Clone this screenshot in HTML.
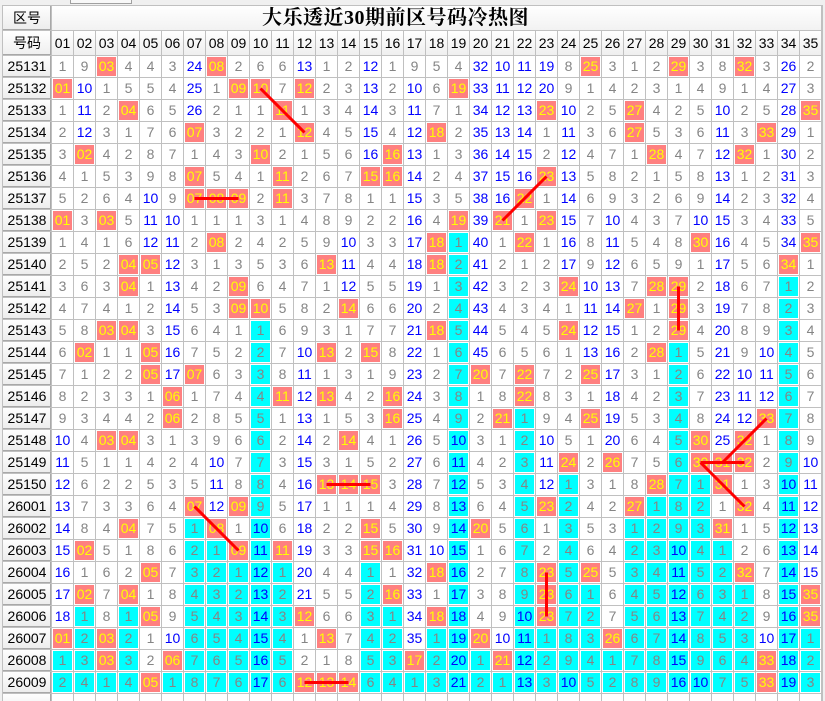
<!DOCTYPE html>
<html><head><meta charset="utf-8">
<style>
html,body{margin:0;padding:0;background:#f0f0f0;width:825px;height:701px;overflow:hidden;position:relative}
.tab{position:absolute;left:70px;top:-1px;width:60px;height:3px;border:1px solid #a0a0a0;background:#f8f8f8}
table{position:absolute;left:2px;top:5px;width:820px;border-collapse:separate;border-spacing:1px;background:#c0c0c0;table-layout:fixed;font-family:"Liberation Sans","Noto Sans CJK SC",sans-serif;font-size:14px}
col{width:21px}
col.h{width:48px}
td{height:21px;padding:0;background:#fff;color:#858585;text-align:center;vertical-align:middle;line-height:21px;overflow:hidden;white-space:nowrap}
td.h{color:#000;background:linear-gradient(#fefefe,#ececec);box-shadow:inset -1px -1px 0 #a8a8a8}
tr.t td{height:24px}
tr.t td.title{font-family:"Liberation Serif","Noto Serif CJK SC",serif;font-weight:bold;font-size:20px;color:#000;text-align:left;padding-left:210px;background:linear-gradient(#fff,#f2f2f2);letter-spacing:0.5px}
tr.n td{height:24px;color:#000;background:linear-gradient(#fff,#efefef)}
.b{color:#0000ff}
.r{background:#ff8080;color:#ffff00;box-shadow:inset 0 0 0 1px #fff}
.c{background:#00ffff;box-shadow:inset 0 0 0 1px #fff}
.cb{background:#00ffff;color:#0000ff;box-shadow:inset 0 0 0 1px #fff}
svg{position:absolute;left:0;top:0}
</style></head><body>
<div class="tab"></div>
<table>
<colgroup><col class="h"><col><col><col><col><col><col><col><col><col><col><col><col><col><col><col><col><col><col><col><col><col><col><col><col><col><col><col><col><col><col><col><col><col><col><col></colgroup>
<tr class="t"><td class="h">区号</td><td class="title" colspan="35">大乐透近30期前区号码冷热图</td></tr>
<tr class="n"><td class="h">号码</td><td>01<td>02<td>03<td>04<td>05<td>06<td>07<td>08<td>09<td>10<td>11<td>12<td>13<td>14<td>15<td>16<td>17<td>18<td>19<td>20<td>21<td>22<td>23<td>24<td>25<td>26<td>27<td>28<td>29<td>30<td>31<td>32<td>33<td>34<td>35</tr>
<tr><td class="h">25131<td>1<td>9<td class=r>03<td>4<td>4<td>3<td class=b>24<td class=r>08<td>2<td>6<td>6<td class=b>13<td>1<td>2<td class=b>12<td>1<td>9<td>5<td>4<td class=b>32<td class=b>10<td class=b>11<td class=b>19<td>8<td class=r>25<td>3<td>1<td>2<td class=r>29<td>3<td>8<td class=r>32<td>3<td class=b>26<td>2</tr>
<tr><td class="h">25132<td class=r>01<td class=b>10<td>1<td>5<td>5<td>4<td class=b>25<td>1<td class=r>09<td class=r>10<td>7<td class=r>12<td>2<td>3<td class=b>13<td>2<td class=b>10<td>6<td class=r>19<td class=b>33<td class=b>11<td class=b>12<td class=b>20<td>9<td>1<td>4<td>2<td>3<td>1<td>4<td>9<td>1<td>4<td class=b>27<td>3</tr>
<tr><td class="h">25133<td>1<td class=b>11<td>2<td class=r>04<td>6<td>5<td class=b>26<td>2<td>1<td>1<td class=r>11<td>1<td>3<td>4<td class=b>14<td>3<td class=b>11<td>7<td>1<td class=b>34<td class=b>12<td class=b>13<td class=r>23<td class=b>10<td>2<td>5<td class=r>27<td>4<td>2<td>5<td class=b>10<td>2<td>5<td class=b>28<td class=r>35</tr>
<tr><td class="h">25134<td>2<td class=b>12<td>3<td>1<td>7<td>6<td class=r>07<td>3<td>2<td>2<td>1<td class=r>12<td>4<td>5<td class=b>15<td>4<td class=b>12<td class=r>18<td>2<td class=b>35<td class=b>13<td class=b>14<td>1<td class=b>11<td>3<td>6<td class=r>27<td>5<td>3<td>6<td class=b>11<td>3<td class=r>33<td class=b>29<td>1</tr>
<tr><td class="h">25135<td>3<td class=r>02<td>4<td>2<td>8<td>7<td>1<td>4<td>3<td class=r>10<td>2<td>1<td>5<td>6<td class=b>16<td class=r>16<td class=b>13<td>1<td>3<td class=b>36<td class=b>14<td class=b>15<td>2<td class=b>12<td>4<td>7<td>1<td class=r>28<td>4<td>7<td class=b>12<td class=r>32<td>1<td class=b>30<td>2</tr>
<tr><td class="h">25136<td>4<td>1<td>5<td>3<td>9<td>8<td class=r>07<td>5<td>4<td>1<td class=r>11<td>2<td>6<td>7<td class=r>15<td class=r>16<td class=b>14<td>2<td>4<td class=b>37<td class=b>15<td class=b>16<td class=r>23<td class=b>13<td>5<td>8<td>2<td>1<td>5<td>8<td class=b>13<td>1<td>2<td class=b>31<td>3</tr>
<tr><td class="h">25137<td>5<td>2<td>6<td>4<td class=b>10<td>9<td class=r>07<td class=r>08<td class=r>09<td>2<td class=r>11<td>3<td>7<td>8<td>1<td>1<td class=b>15<td>3<td>5<td class=b>38<td class=b>16<td class=r>22<td>1<td class=b>14<td>6<td>9<td>3<td>2<td>6<td>9<td class=b>14<td>2<td>3<td class=b>32<td>4</tr>
<tr><td class="h">25138<td class=r>01<td>3<td class=r>03<td>5<td class=b>11<td class=b>10<td>1<td>1<td>1<td>3<td>1<td>4<td>8<td>9<td>2<td>2<td class=b>16<td>4<td class=r>19<td class=b>39<td class=r>21<td>1<td class=r>23<td class=b>15<td>7<td class=b>10<td>4<td>3<td>7<td class=b>10<td class=b>15<td>3<td>4<td class=b>33<td>5</tr>
<tr><td class="h">25139<td>1<td>4<td>1<td>6<td class=b>12<td class=b>11<td>2<td class=r>08<td>2<td>4<td>2<td>5<td>9<td class=b>10<td>3<td>3<td class=b>17<td class=r>18<td class=c>1<td class=b>40<td>1<td class=r>22<td>1<td class=b>16<td>8<td class=b>11<td>5<td>4<td>8<td class=r>30<td class=b>16<td>4<td>5<td class=b>34<td class=r>35</tr>
<tr><td class="h">25140<td>2<td>5<td>2<td class=r>04<td class=r>05<td class=b>12<td>3<td>1<td>3<td>5<td>3<td>6<td class=r>13<td class=b>11<td>4<td>4<td class=b>18<td class=r>18<td class=c>2<td class=b>41<td>2<td>1<td>2<td class=b>17<td>9<td class=b>12<td>6<td>5<td>9<td>1<td class=b>17<td>5<td>6<td class=r>34<td>1</tr>
<tr><td class="h">25141<td>3<td>6<td>3<td class=r>04<td>1<td class=b>13<td>4<td>2<td class=r>09<td>6<td>4<td>7<td>1<td class=b>12<td>5<td>5<td class=b>19<td>1<td class=c>3<td class=b>42<td>3<td>2<td>3<td class=r>24<td class=b>10<td class=b>13<td>7<td class=r>28<td class=r>29<td>2<td class=b>18<td>6<td>7<td class=c>1<td>2</tr>
<tr><td class="h">25142<td>4<td>7<td>4<td>1<td>2<td class=b>14<td>5<td>3<td class=r>09<td class=r>10<td>5<td>8<td>2<td class=r>14<td>6<td>6<td class=b>20<td>2<td class=c>4<td class=b>43<td>4<td>3<td>4<td>1<td class=b>11<td class=b>14<td class=r>27<td>1<td class=r>29<td>3<td class=b>19<td>7<td>8<td class=c>2<td>3</tr>
<tr><td class="h">25143<td>5<td>8<td class=r>03<td class=r>04<td>3<td class=b>15<td>6<td>4<td>1<td class=c>1<td>6<td>9<td>3<td>1<td>7<td>7<td class=b>21<td class=r>18<td class=c>5<td class=b>44<td>5<td>4<td>5<td class=r>24<td class=b>12<td class=b>15<td>1<td>2<td class=r>29<td>4<td class=b>20<td>8<td>9<td class=c>3<td>4</tr>
<tr><td class="h">25144<td>6<td class=r>02<td>1<td>1<td class=r>05<td class=b>16<td>7<td>5<td>2<td class=c>2<td>7<td class=b>10<td class=r>13<td>2<td class=r>15<td>8<td class=b>22<td>1<td class=c>6<td class=b>45<td>6<td>5<td>6<td>1<td class=b>13<td class=b>16<td>2<td class=r>28<td class=c>1<td>5<td class=b>21<td>9<td class=b>10<td class=c>4<td>5</tr>
<tr><td class="h">25145<td>7<td>1<td>2<td>2<td class=r>05<td class=b>17<td class=r>07<td>6<td>3<td class=c>3<td>8<td class=b>11<td>1<td>3<td>1<td>9<td class=b>23<td>2<td class=c>7<td class=r>20<td>7<td class=r>22<td>7<td>2<td class=r>25<td class=b>17<td>3<td>1<td class=c>2<td>6<td class=b>22<td class=b>10<td class=b>11<td class=c>5<td>6</tr>
<tr><td class="h">25146<td>8<td>2<td>3<td>3<td>1<td class=r>06<td>1<td>7<td>4<td class=c>4<td class=r>11<td class=b>12<td class=r>13<td>4<td>2<td class=r>16<td class=b>24<td>3<td class=c>8<td>1<td>8<td class=r>22<td>8<td>3<td>1<td class=b>18<td>4<td>2<td class=c>3<td>7<td class=b>23<td class=b>11<td class=b>12<td class=c>6<td>7</tr>
<tr><td class="h">25147<td>9<td>3<td>4<td>4<td>2<td class=r>06<td>2<td>8<td>5<td class=c>5<td>1<td class=b>13<td>1<td>5<td>3<td class=r>16<td class=b>25<td>4<td class=c>9<td>2<td class=r>21<td class=c>1<td>9<td>4<td class=r>25<td class=b>19<td>5<td>3<td class=c>4<td>8<td class=b>24<td class=b>12<td class=r>33<td class=c>7<td>8</tr>
<tr><td class="h">25148<td class=b>10<td>4<td class=r>03<td class=r>04<td>3<td>1<td>3<td>9<td>6<td class=c>6<td>2<td class=b>14<td>2<td class=r>14<td>4<td>1<td class=b>26<td>5<td class=cb>10<td>3<td>1<td class=c>2<td class=b>10<td>5<td>1<td class=b>20<td>6<td>4<td class=c>5<td class=r>30<td class=b>25<td class=r>32<td>1<td class=c>8<td>9</tr>
<tr><td class="h">25149<td class=b>11<td>5<td>1<td>1<td>4<td>2<td>4<td class=b>10<td>7<td class=c>7<td>3<td class=b>15<td>3<td>1<td>5<td>2<td class=b>27<td>6<td class=cb>11<td>4<td>2<td class=c>3<td class=b>11<td class=r>24<td>2<td class=r>26<td>7<td>5<td class=c>6<td class=r>30<td class=r>31<td class=r>32<td>2<td class=c>9<td class=b>10</tr>
<tr><td class="h">25150<td class=b>12<td>6<td>2<td>2<td>5<td>3<td>5<td class=b>11<td>8<td class=c>8<td>4<td class=b>16<td class=r>13<td class=r>14<td class=r>15<td>3<td class=b>28<td>7<td class=cb>12<td>5<td>3<td class=c>4<td class=b>12<td class=c>1<td>3<td>1<td>8<td class=r>28<td class=c>7<td class=c>1<td class=r>31<td>1<td>3<td class=cb>10<td class=b>11</tr>
<tr><td class="h">26001<td class=b>13<td>7<td>3<td>3<td>6<td>4<td class=r>07<td class=b>12<td class=r>09<td class=c>9<td>5<td class=b>17<td>1<td>1<td>1<td>4<td class=b>29<td>8<td class=cb>13<td>6<td>4<td class=c>5<td class=r>23<td class=c>2<td>4<td>2<td class=r>27<td class=c>1<td class=c>8<td class=c>2<td>1<td class=r>32<td>4<td class=cb>11<td class=b>12</tr>
<tr><td class="h">26002<td class=b>14<td>8<td>4<td class=r>04<td>7<td>5<td class=c>1<td class=r>08<td>1<td class=cb>10<td>6<td class=b>18<td>2<td>2<td class=r>15<td>5<td class=b>30<td>9<td class=cb>14<td class=r>20<td>5<td class=c>6<td>1<td class=c>3<td>5<td>3<td class=c>1<td class=c>2<td class=c>9<td class=c>3<td class=r>31<td>1<td>5<td class=cb>12<td class=b>13</tr>
<tr><td class="h">26003<td class=b>15<td class=r>02<td>5<td>1<td>8<td>6<td class=c>2<td class=c>1<td class=r>09<td class=cb>11<td class=r>11<td class=b>19<td>3<td>3<td class=r>15<td class=r>16<td class=b>31<td class=b>10<td class=cb>15<td>1<td>6<td class=c>7<td>2<td class=c>4<td>6<td>4<td class=c>2<td class=c>3<td class=cb>10<td class=c>4<td class=c>1<td>2<td>6<td class=cb>13<td class=b>14</tr>
<tr><td class="h">26004<td class=b>16<td>1<td>6<td>2<td class=r>05<td>7<td class=c>3<td class=c>2<td class=c>1<td class=cb>12<td class=c>1<td class=b>20<td>4<td>4<td class=c>1<td>1<td class=b>32<td class=r>18<td class=cb>16<td>2<td>7<td class=c>8<td class=r>23<td class=c>5<td class=r>25<td>5<td class=c>3<td class=c>4<td class=cb>11<td class=c>5<td class=c>2<td class=r>32<td>7<td class=cb>14<td class=b>15</tr>
<tr><td class="h">26005<td class=b>17<td class=r>02<td>7<td class=r>04<td>1<td>8<td class=c>4<td class=c>3<td class=c>2<td class=cb>13<td class=c>2<td class=b>21<td>5<td>5<td class=c>2<td class=r>16<td class=b>33<td>1<td class=cb>17<td>3<td>8<td class=c>9<td class=r>23<td class=c>6<td class=c>1<td>6<td class=c>4<td class=c>5<td class=cb>12<td class=c>6<td class=c>3<td class=c>1<td>8<td class=cb>15<td class=r>35</tr>
<tr><td class="h">26006<td class=b>18<td class=c>1<td>8<td class=c>1<td class=r>05<td>9<td class=c>5<td class=c>4<td class=c>3<td class=cb>14<td class=c>3<td class=r>12<td>6<td>6<td class=c>3<td class=c>1<td class=b>34<td class=r>18<td class=cb>18<td>4<td>9<td class=cb>10<td class=r>23<td class=c>7<td class=c>2<td>7<td class=c>5<td class=c>6<td class=cb>13<td class=c>7<td class=c>4<td class=c>2<td>9<td class=cb>16<td class=r>35</tr>
<tr><td class="h">26007<td class=r>01<td class=c>2<td class=r>03<td class=c>2<td>1<td class=b>10<td class=c>6<td class=c>5<td class=c>4<td class=cb>15<td class=c>4<td>1<td class=r>13<td>7<td class=c>4<td class=c>2<td class=b>35<td class=c>1<td class=cb>19<td class=r>20<td class=b>10<td class=cb>11<td class=c>1<td class=c>8<td class=c>3<td class=r>26<td class=c>6<td class=c>7<td class=cb>14<td class=c>8<td class=c>5<td class=c>3<td class=b>10<td class=cb>17<td class=c>1</tr>
<tr><td class="h">26008<td class=c>1<td class=c>3<td class=r>03<td class=c>3<td>2<td class=r>06<td class=c>7<td class=c>6<td class=c>5<td class=cb>16<td class=c>5<td>2<td>1<td>8<td class=c>5<td class=c>3<td class=r>17<td class=c>2<td class=cb>20<td class=c>1<td class=r>21<td class=cb>12<td class=c>2<td class=c>9<td class=c>4<td class=c>1<td class=c>7<td class=c>8<td class=cb>15<td class=c>9<td class=c>6<td class=c>4<td class=r>33<td class=cb>18<td class=c>2</tr>
<tr><td class="h">26009<td class=c>2<td class=c>4<td class=c>1<td class=c>4<td class=r>05<td class=c>1<td class=c>8<td class=c>7<td class=c>6<td class=cb>17<td class=c>6<td class=r>12<td class=r>13<td class=r>14<td class=c>6<td class=c>4<td class=c>1<td class=c>3<td class=cb>21<td class=c>2<td class=c>1<td class=cb>13<td class=c>3<td class=cb>10<td class=c>5<td class=c>2<td class=c>8<td class=c>9<td class=cb>16<td class=cb>10<td class=c>7<td class=c>5<td class=r>33<td class=cb>19<td class=c>3</tr>
<tr><td class="h"><td><td><td><td><td><td><td><td><td><td><td><td><td><td><td><td><td><td><td><td><td><td><td><td><td><td><td><td><td><td><td><td><td><td><td><td></tr>
</table>
<svg width="825" height="701" viewBox="0 0 825 701">
<g stroke="#ff0000" stroke-width="3" stroke-linecap="butt">
<line x1="260.5" y1="88.5" x2="304.5" y2="132.5"/>
<line x1="194.5" y1="198.5" x2="238.5" y2="198.5"/>
<line x1="502.5" y1="220.5" x2="546.5" y2="176.5"/>
<line x1="678.5" y1="286.5" x2="678.5" y2="330.5"/>
<line x1="766.5" y1="418.5" x2="722.5" y2="462.5"/>
<line x1="700.5" y1="462.5" x2="744.5" y2="462.5"/>
<line x1="700.5" y1="462.5" x2="744.5" y2="506.5"/>
<line x1="326.5" y1="484.5" x2="370.5" y2="484.5"/>
<line x1="194.5" y1="506.5" x2="238.5" y2="550.5"/>
<line x1="546.5" y1="572.5" x2="546.5" y2="616.5"/>
<line x1="304.5" y1="682.5" x2="348.5" y2="682.5"/>
</g>
</svg>
</body></html>
